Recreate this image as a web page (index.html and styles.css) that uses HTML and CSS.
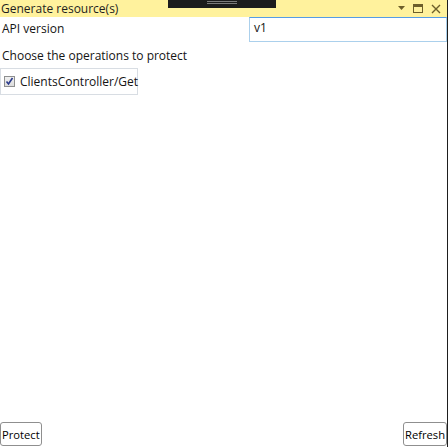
FILE: index.html
```html
<!DOCTYPE html>
<html>
<head>
<meta charset="utf-8">
<link rel="stylesheet" href="styles.css">
</head>
<body>
<div class="window">
  <div class="titlebar">
    <span class="title">Generate resource(s)</span>
    <div class="grip"><span class="grip-line"></span><span class="grip-line"></span></div>
    <div class="title-icons">
      <svg width="8" height="5" viewBox="0 0 8 5"><path d="M0 0h7L3.5 4z" fill="#6d5f2a"/></svg>
      <svg width="11" height="10" viewBox="0 0 11 10"><rect x="0.5" y="0.5" width="9" height="8" fill="none" stroke="#6d5f2a"/><rect x="0" y="0" width="10" height="3" fill="#6d5f2a"/></svg>
      <svg width="10" height="10" viewBox="0 0 10 10"><path d="M1 1l8 8M9 1l-8 8" stroke="#6d5f2a" stroke-width="1.4"/></svg>
    </div>
  </div>
  <div class="content">
    <div class="version-row">
      <span class="label">API version</span>
      <div class="textbox">v1</div>
    </div>
    <div class="label choose">Choose the operations to protect</div>
    <div class="oplist">
      <label class="opitem">
        <span class="check">
          <svg width="9" height="9" viewBox="0 0 9 9"><path d="M1.5 4.5l2 2.5 4-6" fill="none" stroke="#2a3a8c" stroke-width="1.6"/></svg>
        </span>
        <span>ClientsController/Get</span>
      </label>
    </div>
    <div class="spacer"></div>
    <div class="buttons">
      <button class="btn">Protect</button>
      <button class="btn">Refresh</button>
    </div>
  </div>
</div>
</body>
</html>
```

FILE: styles.css
```css
html, body {
  margin: 0;
  padding: 0;
  background: #ffffff;
}
body {
  font-family: "Open Sans", "Noto Sans", sans-serif;
  font-size: 12px;
  color: #141414;
}
.window {
  width: 447px;
  height: 447px;
  border-right: 1px solid #1e1e1e;
  display: flex;
  flex-direction: column;
}
.titlebar {
  height: 17px;
  background: #fff29d;
  display: flex;
  align-items: center;
  position: relative;
  padding: 0 6px 0 1px;
}
.title {
  flex: 1;
  font-size: 12px;
  line-height: 17px;
  color: #1e1e1e;
}
.grip {
  position: absolute;
  left: 168px;
  top: 0;
  width: 108px;
  height: 8px;
  background: #1c1c1c;
  display: flex;
  flex-direction: column;
  align-items: center;
  gap: 1px;
  padding-top: 1px;
  box-sizing: border-box;
}
.grip-line {
  width: 30px;
  height: 1px;
  background: #7a7a7a;
}
.title-icons {
  display: flex;
  align-items: center;
  gap: 7px;
}
.content {
  flex: 1;
  display: flex;
  flex-direction: column;
}
.version-row {
  display: flex;
  justify-content: space-between;
  align-items: flex-start;
}
.label {
  padding-left: 2px;
  line-height: 16px;
}
.version-row .label {
  padding-top: 4px;
}
.textbox {
  width: 198px;
  height: 25px;
  box-sizing: border-box;
  border: 1px solid #abd0ec;
  border-top-color: #569de5;
  padding: 2px 4px;
  line-height: 16px;
}
.choose {
  margin-top: 6px;
}
.oplist {
  margin-top: 4px;
  width: 138px;
  height: 27px;
  box-sizing: border-box;
  border: 1px solid #d8dde3;
  display: flex;
  align-items: center;
}
.opitem {
  display: flex;
  align-items: center;
  gap: 5px;
  padding-left: 3px;
}
.check {
  width: 11px;
  height: 11px;
  box-sizing: border-box;
  border: 1px solid #8e8f8f;
  background: linear-gradient(#f0f0f0, #dcdcdc);
  display: flex;
  align-items: center;
  justify-content: center;
}
.spacer {
  flex: 1;
}
.buttons {
  display: flex;
  justify-content: space-between;
  margin-bottom: 1px;
}
.btn {
  height: 24px;
  font-family: inherit;
  font-size: 11.2px;
  color: #000;
  background: #ffffff;
  border: 1px solid #8f8f8f;
  border-radius: 3px;
  padding: 0 1px;
  margin: 0;
}
```
